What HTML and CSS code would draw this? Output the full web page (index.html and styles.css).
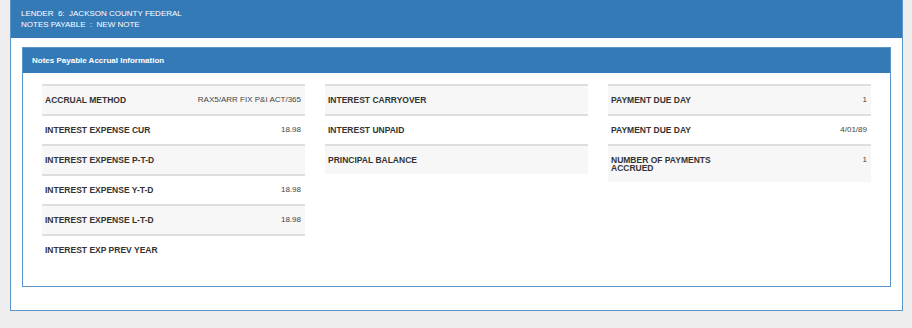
FILE: index.html
```html
<!DOCTYPE html>
<html>
  <head>
    <title>Notes Payable</title>
    <meta name="viewport" content="width=device-width, initial-scale=1.0">
    <link rel="stylesheet" href="styles.css">
  </head>
  <body>
    <div class="panel outer">
      <div class="panel-heading">
        <div>LENDER&nbsp; 6:&nbsp; JACKSON COUNTY FEDERAL</div>
        <div>NOTES PAYABLE&nbsp; :&nbsp; NEW NOTE</div>
      </div>
      <div class="outer-body">
        <div class="panel inner">
          <div class="panel-heading inner-heading">Notes Payable Accrual Information</div>
          <div class="inner-body">
            <div class="col">
              <div class="row"><span class="label">ACCRUAL METHOD</span><span class="value">RAX5/ARR FIX P&amp;I ACT/365</span></div>
              <div class="row"><span class="label">INTEREST EXPENSE CUR</span><span class="value">18.98</span></div>
              <div class="row"><span class="label">INTEREST EXPENSE P-T-D</span><span class="value"></span></div>
              <div class="row"><span class="label">INTEREST EXPENSE Y-T-D</span><span class="value">18.98</span></div>
              <div class="row"><span class="label">INTEREST EXPENSE L-T-D</span><span class="value">18.98</span></div>
              <div class="row"><span class="label">INTEREST EXP PREV YEAR</span><span class="value"></span></div>
            </div>
            <div class="col">
              <div class="row"><span class="label">INTEREST CARRYOVER</span><span class="value"></span></div>
              <div class="row"><span class="label">INTEREST UNPAID</span><span class="value"></span></div>
              <div class="row"><span class="label">PRINCIPAL BALANCE</span><span class="value"></span></div>
            </div>
            <div class="col">
              <div class="row"><span class="label">PAYMENT DUE DAY</span><span class="value">1</span></div>
              <div class="row"><span class="label">PAYMENT DUE DAY</span><span class="value">4/01/89</span></div>
              <div class="row"><span class="label narrow">NUMBER OF PAYMENTS ACCRUED</span><span class="value">1</span></div>
            </div>
          </div>
        </div>
      </div>
    </div>
  </body>
</html>
```

FILE: styles.css
```css
body {
  margin: 0;
  background-color: #eeeeee;
  font-family: "Liberation Sans", Arial, sans-serif;
  color: #333333;
}
.panel {
  background-color: #ffffff;
  border: 1px solid #5b95cc;
}
.outer {
  margin: 0 9px 0 10px;
  border-top: none;
}
.panel-heading {
  background-color: #337ab7;
  color: #ffffff;
  font-size: 8px;
  line-height: 11px;
  padding: 8px 10px 8px;
}
.outer-body {
  padding: 9px 11px 23px;
}
.inner-heading {
  font-weight: bold;
  padding: 8px 9px 7px;
  line-height: 10px;
}
.inner-body {
  display: grid;
  grid-template-columns: repeat(3, 263px);
  column-gap: 20px;
  padding: 11px 19px 22px 19px;
}
.row {
  display: flex;
  justify-content: space-between;
  align-items: flex-start;
  border-top: 2px solid #dedede;
  padding: 10px 4px 10px 3px;
  font-size: 8px;
  line-height: 8px;
}
.row:nth-child(odd) {
  background-color: #f7f7f7;
}
.col:first-child .row:last-child {
  background-color: #ffffff;
}
.label {
  font-weight: bold;
  font-size: 8.5px;
  color: #333333;
}
.narrow {
  width: 110px;
}
.value {
  text-align: right;
  color: #444444;
}
```
